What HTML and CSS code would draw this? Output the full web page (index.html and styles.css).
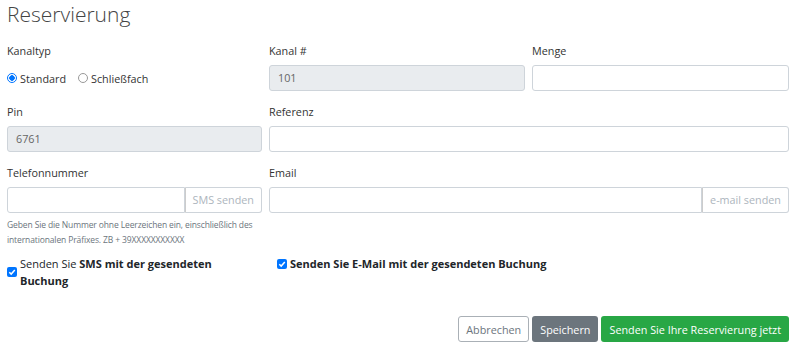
FILE: index.html
```html
<!DOCTYPE html>
<html lang="de">
<head>
<meta charset="utf-8">
<title>Reservierung</title>
<link rel="stylesheet" href="styles.css">
</head>
<body>
<div class="page">
  <h1 class="title">Reservierung</h1>
  <div class="grid">
    <div class="field">
      <div class="label">Kanaltyp</div>
      <div class="radios">
        <label class="radio"><span class="rdot on"></span>Standard</label>
        <label class="radio"><span class="rdot"></span>Schließfach</label>
      </div>
    </div>
    <div class="field">
      <div class="label">Kanal #</div>
      <div class="input disabled">101</div>
    </div>
    <div class="field">
      <div class="label">Menge</div>
      <div class="input"></div>
    </div>

    <div class="field">
      <div class="label">Pin</div>
      <div class="input disabled">6761</div>
    </div>
    <div class="field span2">
      <div class="label">Referenz</div>
      <div class="input"></div>
    </div>

    <div class="field">
      <div class="label">Telefonnummer</div>
      <div class="group">
        <div class="input grow left"></div>
        <div class="addon">SMS senden</div>
      </div>
      <div class="help">Geben Sie die Nummer ohne Leerzeichen ein, einschließlich des internationalen Präfixes. ZB + 39XXXXXXXXXXX</div>
    </div>
    <div class="field span2">
      <div class="label">Email</div>
      <div class="group">
        <div class="input grow left"></div>
        <div class="addon">e-mail senden</div>
      </div>
    </div>
  </div>

  <div class="checks">
    <label class="check first"><span class="cbox"><svg viewBox="0 0 10 10" width="10" height="10"><path d="M2.3 5.2 L4.2 7.1 L7.8 3" fill="none" stroke="#fff" stroke-width="1.5"/></svg></span><span class="ctext"><span class="line">Senden Sie <b>SMS mit der gesendeten</b></span> <b>Buchung</b></span></label>
    <label class="check second"><span class="cbox"><svg viewBox="0 0 10 10" width="10" height="10"><path d="M2.3 5.2 L4.2 7.1 L7.8 3" fill="none" stroke="#fff" stroke-width="1.5"/></svg></span><b>Senden Sie E-Mail mit der gesendeten Buchung</b></label>
  </div>

  <div class="actions">
    <button class="btn outline">Abbrechen</button>
    <button class="btn grey">Speichern</button>
    <button class="btn green">Senden Sie Ihre Reservierung jetzt</button>
  </div>
</div>
</body>
</html>
```
FILE: styles.css
```css
* { box-sizing: border-box; }
body {
  margin: 0;
  background: #fff;
  font-family: "Segoe UI", "Open Sans", "Noto Sans", sans-serif;
  font-size: 10.8px;
  color: #212529;
}
.page {
  width: 782px;
  margin-left: 7px;
}
.title {
  margin: 0;
  height: 38px;
  font-size: 21px;
  font-weight: 300;
  color: #444;
  line-height: 28px;
}
.grid {
  display: grid;
  grid-template-columns: 255px 256px 257px;
  column-gap: 7px;
  row-gap: 8px;
}
.span2 { grid-column: span 2; }
.label {
  height: 27px;
  line-height: 26px;
  color: #333;
  font-size: 10.8px;
}
.input {
  height: 26px;
  border: 1px solid #ced4da;
  border-radius: 3px;
  background: #fff;
  padding: 0 8px;
  line-height: 24px;
  color: #495057;
  font-size: 10.8px;
}
.input.disabled {
  background: #e9ecef;
  color: #666;
}
.radios {
  display: flex;
  align-items: center;
  height: 26px;
  gap: 12px;
}
.radio {
  display: flex;
  align-items: center;
  gap: 3px;
  font-size: 10.8px;
  color: #333;
}
.rdot {
  width: 10px;
  height: 10px;
  border-radius: 50%;
  border: 1px solid #999;
  background: #fff;
}
.rdot.on {
  border-color: #0075ff;
  background: radial-gradient(circle, #0075ff 0 2.5px, #fff 3px);
}
.group { display: flex; }
.grow { flex: 1; }
.left { border-radius: 3px 0 0 3px; }
.addon {
  height: 26px;
  border: 1px solid #ced4da;
  border-left-color: #ccc;
  border-radius: 0 3px 3px 0;
  padding: 0 7px;
  line-height: 24px;
  color: #adb5bd;
  font-size: 10.8px;
  white-space: nowrap;
}
.help {
  margin-top: 4px;
  font-size: 8.5px;
  letter-spacing: -0.12px;
  line-height: 15px;
  color: #6c757d;
}
.checks {
  display: flex;
  margin-top: 8px;
}
.check {
  display: flex;
  align-items: center;
  gap: 3px;
  font-size: 11px;
  line-height: 17px;
  color: #212529;
}
.check b { font-weight: 700; }
.ctext .line { white-space: nowrap; }
.check.first { width: 215px; }
.check.second { margin-left: 55px; align-self: flex-start; }
.cbox {
  flex: none;
  width: 10px;
  height: 10px;
  border-radius: 2px;
  background: #0075ff;
  display: flex;
  align-items: center;
  justify-content: center;
}
.cbox svg { display: block; }
.actions {
  display: flex;
  justify-content: flex-end;
  gap: 3px;
  margin-top: 27px;
}
.btn {
  height: 26px;
  padding: 0 7px;
  border-radius: 3px;
  font-family: inherit;
  font-size: 10.8px;
  border: 1px solid transparent;
  cursor: pointer;
}
.btn.outline {
  background: #fff;
  border-color: #aab0b6;
  color: #6c757d;
}
.btn.grey {
  background: #6c757d;
  color: #fff;
}
.btn.green {
  background: #28a745;
  color: #fff;
}
```
